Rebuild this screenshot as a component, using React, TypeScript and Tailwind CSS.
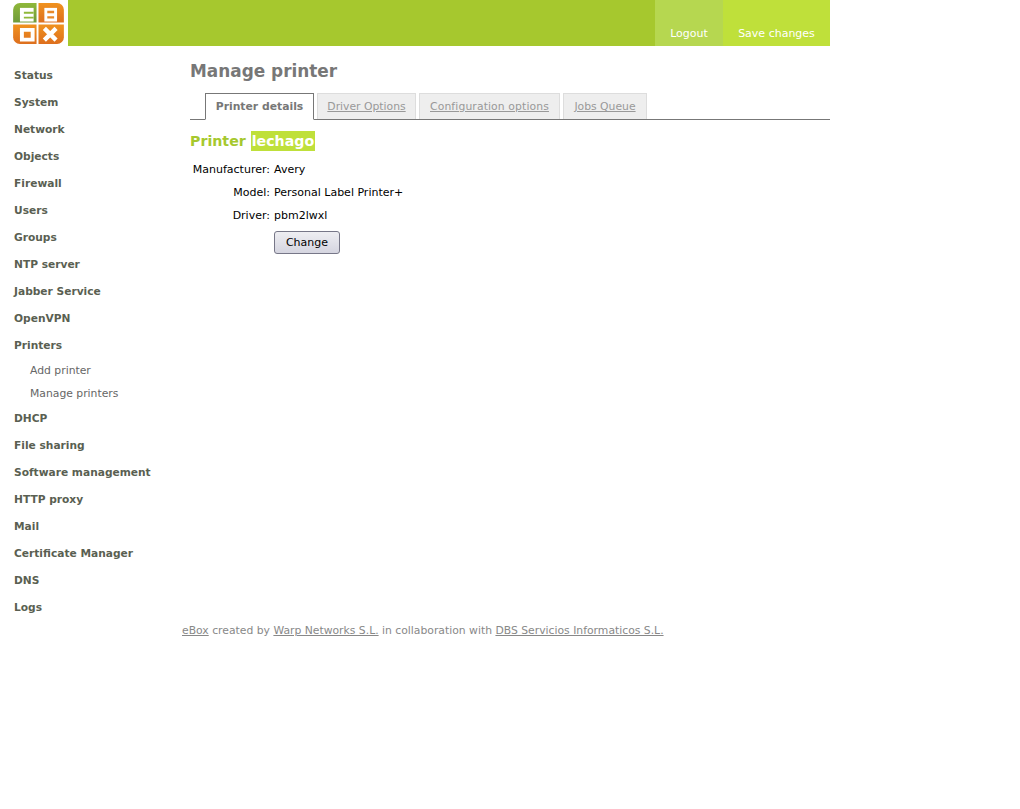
const font = { fontFamily: '"DejaVu Sans", sans-serif' };

const menuA = ["Status","System","Network","Objects","Firewall","Users","Groups","NTP server","Jabber Service","OpenVPN","Printers"];
const menuB = ["DHCP","File sharing","Software management","HTTP proxy","Mail","Certificate Manager","DNS","Logs"];

function Item({ label }: { label: string }) {
  return <div className="h-[27px] pl-[14px] leading-[27px] text-[10.65px] font-bold text-[#5a5f52] whitespace-nowrap">{label}</div>;
}
function Sub({ label }: { label: string }) {
  return <div className="h-[23px] pl-[30px] leading-[23px] text-[10.8px] text-[#666666] whitespace-nowrap">{label}</div>;
}
function Logo() {
  return (
    <svg width="51" height="41" viewBox="0 0 52 42">
      <defs>
        <linearGradient id="lg" x1="0" y1="0" x2="0" y2="1">
          <stop offset="0" stopColor="#8fb83a" />
          <stop offset="1" stopColor="#6f9a3a" />
        </linearGradient>
        <linearGradient id="lo" x1="0" y1="0" x2="0" y2="1">
          <stop offset="0" stopColor="#f0921f" />
          <stop offset="1" stopColor="#dd6f1e" />
        </linearGradient>
      </defs>
      <path d="M7 0h17v20H0V7a7 7 0 0 1 7-7z" fill="url(#lg)" />
      <path d="M26 0h19a7 7 0 0 1 7 7v13H26z" fill="url(#lo)" />
      <path d="M0 22h24v20H7a7 7 0 0 1-7-7z" fill="url(#lo)" />
      <path d="M26 22h26v13a7 7 0 0 1-7 7H26z" fill="url(#lo)" />
      <path d="M7 5h14v14H7z" fill="#fff" />
      <path d="M11 9h10v2H11zM11 14h10v2H11z" fill="#8fb83a" />
      <path d="M32 5h13v14H32z" fill="#fff" />
      <path d="M35 8h7v2.5H35zM35 13.5h7V16H35z" fill="#e8892a" />
      <path d="M9 27.5h11v10H9z" fill="none" stroke="#fff" strokeWidth="4" />
      <path d="M32 26l12 12M44 26L32 38" stroke="#fff" strokeWidth="4.5" />
    </svg>
  );
}
function Row({ label, value }: { label: string; value: string }) {
  return (
    <div className="flex h-[23px] items-center text-black">
      <div className="w-[80px] text-right whitespace-nowrap">{label}</div>
      <div className="pl-[4px] whitespace-nowrap">{value}</div>
    </div>
  );
}
const inactive = "h-[26px] border border-b-0 border-[#dddddd] bg-[#eeeeee] text-center leading-[25px] text-[#999999] underline whitespace-nowrap";

export default function App() {
  return (
    <div style={font} className="relative w-[1020px] h-[809px] bg-white text-[10.8px] overflow-hidden">
      <header className="w-[830px] h-[46px] flex">
        <div className="w-[68px] h-[46px] pl-[13px] pt-[3px] bg-white"><Logo /></div>
        <div className="flex-1 bg-[#a6c82e]" />
        <div className="w-[68px] bg-[#b6d750] text-white text-center pt-[26px] leading-[15px] text-[11px]">Logout</div>
        <div className="w-[107px] bg-[#bfe03a] text-white text-center pt-[26px] leading-[15px] text-[11px]">Save changes</div>
      </header>
      <div className="flex">
        <nav className="w-[190px] pt-[16px]">
          {menuA.map((m) => <Item key={m} label={m} />)}
          <Sub label="Add printer" />
          <Sub label="Manage printers" />
          {menuB.map((m) => <Item key={m} label={m} />)}
        </nav>
        <main className="w-[640px]">
          <h1 className="mt-[14px] h-[22px] leading-[22px] text-[16.9px] font-bold text-[#777777]">Manage printer</h1>
          <div className="mt-[11px] h-[27px] border-b border-[#777777] pl-[15px] flex items-end gap-[3px]">
            <div className="w-[109px] h-[27px] -mb-px border border-[#777777] border-b-white bg-white text-center leading-[26px] font-bold text-[#777777] whitespace-nowrap">Printer details</div>
            <div className={`w-[99px] ${inactive}`}>Driver Options</div>
            <div className={`w-[141px] tracking-[0.12px] ${inactive}`}>Configuration options</div>
            <div className={`w-[84px] ${inactive}`}>Jobs Queue</div>
          </div>
          <h2 className="mt-[11px] h-[20px] leading-[20px] text-[14.2px] font-bold text-[#a6c82e] whitespace-nowrap">
            Printer <span className="inline-block bg-[#bfe03a] text-white px-[1px]">lechago</span>
          </h2>
          <div className="mt-[8px] text-[11px]">
            <Row label="Manufacturer:" value="Avery" />
            <Row label="Model:" value="Personal Label Printer+" />
            <Row label="Driver:" value="pbm2lwxl" />
          </div>
          <div className="pl-[84px] pt-[3px]">
            <button className="block h-[23px] w-[66px] pt-[1px] rounded-[3px] border border-[#777788] bg-gradient-to-b from-[#eeeef2] to-[#d5d5e0] text-black text-[11px] text-center">Change</button>
          </div>
        </main>
      </div>
      <footer className="absolute left-[182px] top-[623px] text-[10.8px] leading-[15px] text-[#888888] whitespace-nowrap">
        <span className="underline">eBox</span> created by <span className="underline">Warp Networks S.L.</span> in collaboration with <span className="underline">DBS Servicios Informaticos S.L.</span>
      </footer>
    </div>
  );
}
